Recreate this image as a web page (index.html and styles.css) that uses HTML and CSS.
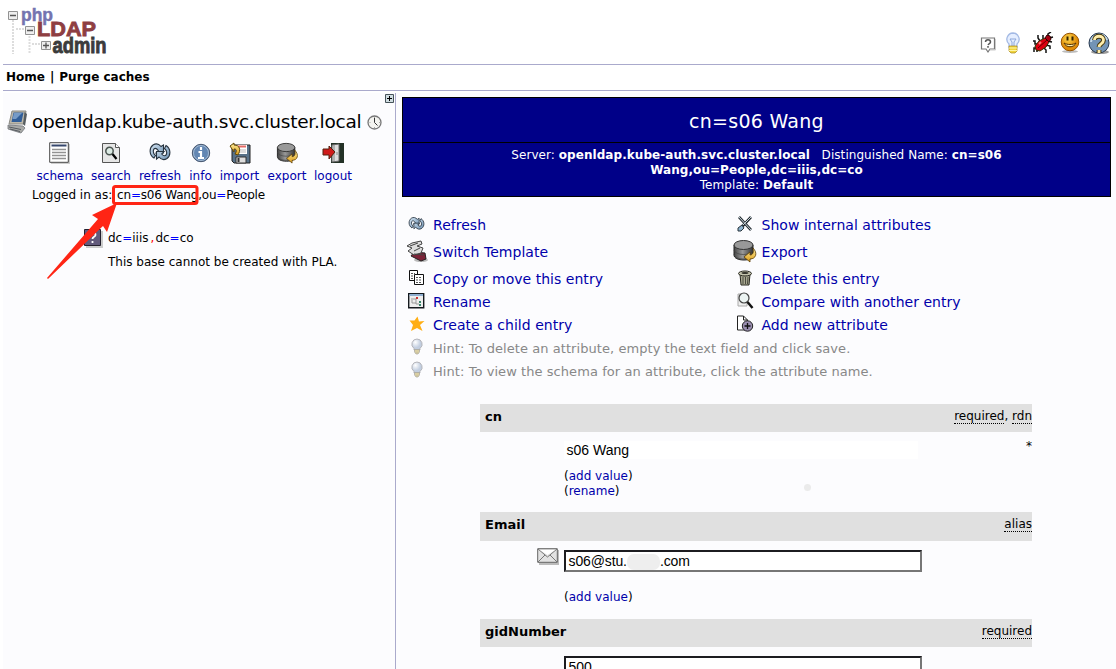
FILE: index.html
```html
<!DOCTYPE html>
<html lang="en">
<head>
<meta charset="utf-8">
<title>phpLDAPadmin</title>
<link rel="stylesheet" href="styles.css">
</head>
<body>
<svg class="defs" width="0" height="0">
  <defs>
    <linearGradient id="steel" x1="0" y1="0" x2="1" y2="1"><stop offset="0" stop-color="#d5e5f3"/><stop offset="1" stop-color="#6b8fb0"/></linearGradient>
    <linearGradient id="gold" x1="0" y1="0" x2="0" y2="1"><stop offset="0" stop-color="#fff0a0"/><stop offset="1" stop-color="#db9a16"/></linearGradient>
    <linearGradient id="drum" x1="0" x2="1"><stop offset="0" stop-color="#444"/><stop offset=".45" stop-color="#999"/><stop offset="1" stop-color="#333"/></linearGradient>
    <radialGradient id="glass" cx=".35" cy=".3"><stop offset="0" stop-color="#fff"/><stop offset="1" stop-color="#c2cee0"/></radialGradient>
    <radialGradient id="smile" cx=".4" cy=".3"><stop offset="0" stop-color="#ffd950"/><stop offset="1" stop-color="#df8c08"/></radialGradient>
    <symbol id="refresh" viewBox="0 0 22 20">
      <path d="M5 16C0 13 0 6 4 3c3-2 6-1 8 1.500L14.500 3v8H7l2.300-2.500C7 5.500 5 6 4.500 8c-.5 2 0 4 2 5.500z" fill="url(#steel)" stroke="#26323e" stroke-width="1.100"/>
      <path d="M17 3.500c5 3 5 10 1 13-3 2-6 1-8-1.500L7.500 17V9.500H15L12.700 12c2.300 2.500 4.300 2 4.800 0s0-4-2-5.500z" fill="url(#steel)" stroke="#26323e" stroke-width="1.100"/>
    </symbol>
    <symbol id="export" viewBox="0 0 24 24">
      <path d="M1 6v10c0 3 4 5 10 5s9-2 9-5V6z" fill="url(#drum)" stroke="#222"/>
      <ellipse cx="10.500" cy="6" rx="9.500" ry="4.500" fill="#999" stroke="#333"/>
      <path d="M1 11c1 6 18 6 19 0M1 15.500c1 6 18 6 19 0" fill="none" stroke="#444" stroke-width=".7"/>
      <path d="M20 9c5 5 3 11-3 11v3l-6-5 6-5v3c3 0 4-3 3-7z" fill="url(#gold)" stroke="#5b3d05" stroke-width=".8"/>
    </symbol>
    <symbol id="hint" viewBox="0 0 14 18">
      <path d="M7 1a5.200 5.200 0 0 0-3 9.400V12h6v-1.600A5.200 5.200 0 0 0 7 1z" fill="url(#glass)" stroke="#b6b6bb"/>
      <path d="M4.500 11.500h5V14L8 16H6l-1.500-2z" fill="#e8dca8" stroke="#999" stroke-width=".6"/><path d="M5 13h4M5.500 14.700h3" stroke="#b5ae98" stroke-width=".6"/>
    </symbol>
  </defs>
</svg>

<header class="top">
  <svg class="logo" width="112" height="60" viewBox="0 0 112 60">
    <path d="M10 20v34M13 29h12M26.500 36v18M29 44h11" stroke="#ddd" stroke-width="2" stroke-dasharray="2 1"/>
    <text x="18" y="21" class="logo-php" textLength="32" lengthAdjust="spacingAndGlyphs">php</text>
    <text x="34" y="36" class="logo-ldap" textLength="59" lengthAdjust="spacingAndGlyphs">LDAP</text>
    <text x="49.500" y="53" class="logo-admin" textLength="54" lengthAdjust="spacingAndGlyphs">admin</text>
    <g fill="#eee" stroke="#929292"><path d="M5.500 11.500h9v8h-9zM22.500 26.500h9v8h-9z"/><path d="M38.500 41.500h9v8h-9z"/></g>
    <path d="M7 15.500h6M24 30.500h6M40 45.500h6M43 42.500v6" stroke="#555" stroke-width="1.300"/>
  </svg>
  <nav class="toolbar">
    <svg class="t-say" width="16" height="18" viewBox="0 0 16 18"><path d="M1.500 2h13v11H10l-2 3-2-3H1.500z" fill="#fff" stroke="#777" stroke-width="1.200"/><path d="M15.500 3v11H10" fill="none" stroke="#ccc"/><path d="M5.500 6c0-3 5-3 5 0 0 1.500-2 1.500-2.400 3M8 10v1.700" fill="none" stroke="#555" stroke-width="1.500"/></svg>
    <svg class="t-bulb" width="16" height="23" viewBox="0 0 16 23"><path d="M8 1a6.300 6.300 0 0 0-4 11v3h8v-3A6.300 6.300 0 0 0 8 1z" fill="#e5eeff" stroke="#a3b9e4" stroke-width="1.300"/><path d="M5 7h6l-2 3v4M7 14v-4L5 7" fill="none" stroke="#8ea8db"/><path d="M4 14h8v5l-2 2H6l-2-2z" fill="#f0d43d" stroke="#a6851d" stroke-width=".7"/><path d="M4 16h8M4 18.500h8" stroke="#fff6a6"/></svg>
    <svg class="t-bug" width="22" height="22" viewBox="0 0 22 22"><path d="M6 12H3V9H1M8 9L6 6V3M11 7V3M14 13l4 1v3M12 16l2 2v3M7 16H2v4M16 5V2l3-2M17 6l4-1M15 9l5 1M5 17v3" stroke="#111" fill="none" stroke-width="1.500"/><path d="M3 14l4-5 6-3 4 4-3 5-6 4-4-1z" fill="#dc0010" stroke="#330"/><path d="M13 6l2-3 3 1 1 3-2 3z" fill="#a90010" stroke="#300"/><path d="M6 16l9-8" stroke="#600"/><path d="M7 12l2-2" stroke="#ff7777" stroke-width="2"/></svg>
    <svg class="t-smile" width="20" height="22" viewBox="0 0 20 22"><ellipse cx="10" cy="19.500" rx="8" ry="1.500" fill="#bbb"/><circle cx="10" cy="10" r="8.800" fill="url(#smile)" stroke="#965200"/><path d="M7.500 4.500v4M12.500 4.500v4" stroke="#342100" stroke-width="2"/><path d="M4 11c2 5 10 5 12 0-3 2-9 2-12 0z" fill="#fff1b0" stroke="#553200"/></svg>
    <svg width="22" height="23" viewBox="0 0 22 23"><ellipse cx="12" cy="20" rx="9" ry="2" fill="#999"/><circle cx="11" cy="11" r="10" fill="#7394b6" stroke="#293a50"/><path d="M3 10C4 2 16 0 19 8" stroke="#c4d9ea" stroke-width="2" fill="none"/><path d="M6.500 8c0-5 9-5 9 0 0 4-4 3-4.500 7M11 18v3" stroke="#443609" stroke-width="4.800" fill="none"/><path d="M6.500 8c0-5 9-5 9 0 0 4-4 3-4.500 7M11 18v3" stroke="#ffedaa" stroke-width="2.800" fill="none"/></svg>
  </nav>
</header>
<div class="menu"><b class="menu-text">Home<span class="bar">|</span>Purge caches</b></div>

<main class="main">
  <aside class="tree">
    <div class="expand"><svg width="9" height="9" viewBox="0 0 9 9"><path d="M.5.500h8v8h-8z" fill="#cfdce0" stroke="#465359"/><path d="M2 4.500h5M4.500 2v5" stroke="#000"/></svg></div>
    <div class="server">
      <svg width="22" height="24" viewBox="0 0 22 24"><path d="M5 1h14l-2 13H2z" fill="#bdb8aa" stroke="#8a8a84"/><path d="M6.500 2.500h10l-2 9.500h-10z" fill="#315e99"/><path d="M7 3h8l-6 6H5.500z" fill="#769bc7"/><path d="M17.500 2l2.500 2-2 12-2-2z" fill="#555c60"/><path d="M1 15l15 1 2 2-4 5-13-4z" fill="#a9aaa8" stroke="#71757a" stroke-width=".8"/><path d="M2 17l12 2.500M3 19l10 2.500" stroke="#565b60"/></svg>
      <span class="server-name">openldap.kube-auth.svc.cluster.local</span>
      <svg width="15" height="15" viewBox="0 0 15 15"><circle cx="7.500" cy="7.500" r="6.500" fill="#f4f4f0" stroke="#777" stroke-width="1.300"/><path d="M7.500 3v4.500l3 3" fill="none" stroke="#333"/><path d="M7.500 2v1M2.500 7.500h1M12 7.500h1M7.500 12v1" stroke="#aaa"/></svg>
    </div>
    <div class="actions">
      <a><svg width="22" height="22" viewBox="0 0 22 22"><path d="M2 2h19v20H2z" fill="#ccc"/><path d="M.7.700h18.600v19.600H.7z" fill="#fff" stroke="#494949"/><path d="M2.500 3.500h15" stroke="#36476d" stroke-width="2"/><path d="M3 7.500h14M3 10.500h14M3 13.500h14M3 16.500h14" stroke="#929292" stroke-width="1.300"/></svg><span>schema</span></a>
      <a><svg width="20" height="22" viewBox="0 0 20 22"><path d="M1.500 1.500h13l4 4v15h-17z" fill="#e6e6e6" stroke="#555"/><path d="M14.500 1.500v4h4" fill="#fff" stroke="#555"/><circle cx="8.500" cy="9" r="3.700" fill="#dcebe4" stroke="#4b5551" stroke-width="1.500"/><path d="M11.500 12l4 5" stroke="#000" stroke-width="2.200"/></svg><span>search</span></a>
      <a><svg width="22" height="22"><use href="#refresh" width="22" height="20"/></svg><span>refresh</span></a>
      <a><svg width="20" height="22" viewBox="0 0 20 22"><circle cx="10" cy="11" r="8.700" fill="#6387b3" stroke="#47566e"/><circle cx="10" cy="11" r="7.500" fill="none" stroke="#a4bad2"/><path d="M10 5v3M7.500 10H10v6M7 16h6" stroke="#fff" stroke-width="2.200" fill="none"/></svg><span>info</span></a>
      <a><svg width="22" height="22" viewBox="0 0 22 22"><path d="M3 3h18v18H5l-2-2z" fill="#577188" stroke="#222"/><path d="M7 3h11v9H7z" fill="#fff"/><path d="M8 4.500h9" stroke="#e66b66" stroke-width="2"/><path d="M9 8h8M9 10h8" stroke="#bbb"/><path d="M7 15h10v6H7z" fill="#ddd" stroke="#333"/><path d="M9.500 16v4" stroke="#333" stroke-width="2"/><path d="M1 4l4-3v2c6 0 7 5 4 10l-3-1c2-3 2-5-1-5v3z" fill="url(#gold)" stroke="#604707"/></svg><span>import</span></a>
      <a><svg width="23" height="22"><use href="#export" width="23" height="22"/></svg><span>export</span></a>
      <a><svg width="22" height="22" viewBox="0 0 22 22"><path d="M9 1h13v20H9z" fill="#233126"/><path d="M10 3l7-1v17l-7 1z" fill="#ddd" stroke="#666"/><path d="M12 3v16M15 10v3" stroke="#888"/><path d="M1 7h6V4l6 6-6 7v-4H1z" fill="#cf1b1b" stroke="#521"/></svg><span>logout</span></a>
    </div>
    <div class="login">Logged in as: <span class="dn">cn<i>=</i>s06 Wang,ou<i>=</i>People</span></div>
    <div class="base">
      <svg width="19" height="19" viewBox="0 0 19 19"><path d="M2 2h17v17H2z" fill="#ccc"/><path d="M.5.500h16v16H.5z" fill="#625a7c" stroke="#24202f"/><path d="M5.500 6c0-4 6-4 6 0 0 2-3 1.500-3 4M8.500 12v2" fill="none" stroke="#fff" stroke-width="1.800"/></svg>
      <span>dc<i>=</i>iiis<em>,</em>dc<i>=</i>co</span>
    </div>
    <div class="notice">This base cannot be created with PLA.</div>
    <svg class="marker" width="160" height="100" viewBox="0 0 160 100"><rect x="71.500" y="2.500" width="83.500" height="17" rx="2" fill="none" stroke="#ff2515" stroke-width="3"/><path d="M5 94L56 35 50 31 75 19 65 48 61 42 6 95z" fill="#ff2515"/></svg>
  </aside>

  <section class="content">
    <h1 class="title"><span>cn=s06 Wang</span></h1>
    <div class="subtitle">
      <div>Server: <b>openldap.kube-auth.svc.cluster.local</b> &nbsp; Distinguished Name: <b>cn=s06</b></div>
      <div><b>Wang,ou=People,dc=iiis,dc=co</b></div>
      <div>Template: <b>Default</b></div>
    </div>

    <div class="commands">
      <a><svg width="17" height="16"><use href="#refresh" width="17" height="15"/></svg><span>Refresh</span></a>
      <a><svg width="18" height="18" viewBox="0 0 18 18"><path d="M3 2l12 13M15 2L4 14" stroke="#252d33" stroke-width="2.600"/><path d="M3 2l12 13M15 2L7 10" stroke="#c8d4da" stroke-width="1"/><path d="M6 10l2 3-3 3H2v-3z" fill="#8cb2ce" stroke="#28343c"/></svg><span>Show internal attributes</span></a>
      <a class="tall"><svg width="22" height="22" viewBox="0 0 22 22"><ellipse cx="15" cy="20" rx="7" ry="2" fill="#bbb"/><path d="M5 16l3-4 11 1 1 6-5 2z" fill="#7d2338" stroke="#222"/><path d="M1 6l5-3 9-2 1 3-5 2 6 2-2 5-7 2-6-4 4-3z" fill="#ddd" stroke="#444"/><path d="M4 6l8-3M8 11l6-3M8 14l10 1" stroke="#444"/></svg><span>Switch Template</span></a>
      <a class="tall"><svg width="24" height="24"><use href="#export" width="24" height="24"/></svg><span>Export</span></a>
      <a><svg width="17" height="17" viewBox="0 0 17 17"><path d="M1.500 1.500h8v10h-8z" fill="#fff" stroke="#111"/><path d="M6.500 5.500h9v10h-9z" fill="#fff" stroke="#111"/><path d="M3 4.500h4M3 7h3M3 9.500h3M8 8.500h6M8 11h6M8 13.500h6" stroke="#555" stroke-dasharray="2 1"/></svg><span>Copy or move this entry</span></a>
      <a><svg width="16" height="18" viewBox="0 0 16 18"><path d="M3 5h10l-1 11H4z" fill="#aaa991" stroke="#28281f"/><ellipse cx="8" cy="4.500" rx="6.500" ry="2.500" fill="#c6c6ae" stroke="#28281f"/><ellipse cx="8" cy="4" rx="3.500" ry="1" fill="#34342b"/><path d="M6 8v7M8.500 8v7M11 8l-.5 7" stroke="#494a40"/></svg><span>Delete this entry</span></a>
      <a><svg width="17" height="16" viewBox="0 0 17 16"><path d="M.7.700h15v14H.7z" fill="#eee" stroke="#15191e" stroke-width="1.400"/><path d="M1.500 2h13.500" stroke="#8fafd0" stroke-width="2"/><path d="M4 5v5h4M5 6h3v5h3" fill="none" stroke="#999"/><path d="M8 5h2" stroke="#c33" stroke-width="2"/><path d="M11 9h2M11 12h2" stroke="#38866b" stroke-width="2"/></svg><span>Rename</span></a>
      <a><svg width="17" height="17" viewBox="0 0 17 17"><path d="M1 2h9v12H1z" fill="#eee" stroke="#aaa"/><circle cx="7" cy="6" r="5" fill="#ecf4f3" stroke="#444" stroke-width="1.200"/><path d="M10.500 10l5 6" stroke="#111" stroke-width="2.500"/></svg><span>Compare with another entry</span></a>
      <a><svg width="16" height="16" viewBox="0 0 16 16"><path d="M8.500.500l1.500 5 5.500-.5-4.500 4 2.500 6-5.500-3-6 3 2-6-3.500-4.500h5z" fill="#ffae13"/></svg><span>Create a child entry</span></a>
      <a><svg width="18" height="17" viewBox="0 0 18 17"><path d="M1.500 1h6l4 4v10h-10z" fill="#fff" stroke="#222"/><path d="M7.500 1v4h4" fill="none" stroke="#222"/><circle cx="11.500" cy="11" r="5.200" fill="#9a8eb0" stroke="#222"/><path d="M8.500 11h6M11.500 8v6" stroke="#111" stroke-width="1.300"/></svg><span>Add new attribute</span></a>
      <p><svg width="14" height="18"><use href="#hint" width="14" height="18"/></svg><span>Hint: To delete an attribute, empty the text field and click save.</span></p>
      <p><svg width="14" height="18"><use href="#hint" width="14" height="18"/></svg><span>Hint: To view the schema for an attribute, click the attribute name.</span></p>
    </div>

    <form class="entry">
      <div class="attr"><b>cn</b><span><u>required</u>, <u>rdn</u></span></div>
      <div class="value value-cn">
        <div class="field plain">s06 Wang</div><span class="star">*</span>
        <div class="links">(<a>add value</a>)<br>(<a>rename</a>)</div><i class="spot"></i>
      </div>
      <div class="attr attr-mail"><b>Email</b><span><u>alias</u></span></div>
      <div class="value value-mail">
        <svg class="mail" width="22" height="17" viewBox="0 0 22 17"><path d="M2 2h20v15H2z" fill="#bbb"/><path d="M.7.700h19.600v13.600H.7z" fill="#e2e2e2" stroke="#666"/><path d="M1 1l9.500 8L20 1M1 14l7-7M20 14l-7-7" fill="none" stroke="#777"/><path d="M3 2h15l-7.500 5z" fill="#fff"/></svg>
        <div class="field mail-field">s06@stu.<i class="blank"></i>.com</div>
        <div class="links">(<a>add value</a>)</div>
      </div>
      <div class="attr"><b>gidNumber</b><span><u>required</u></span></div>
      <div class="value"><div class="field">500</div></div>
    </form>
  </section>
</main>
</body>
</html>
```
FILE: styles.css
```css
* { box-sizing: border-box; }
body { margin: 0; width: 1116px; height: 669px; overflow: hidden; background: #fff; color: #000; font: 12px/15px "DejaVu Sans", sans-serif; }
svg { display: block; flex: none; }
.defs { position: absolute; }
a { color: #0000aa; text-decoration: none; }
i { font-style: normal; color: #00f; }
em { font-style: normal; color: red; margin: 0 1px 0 2px; }
.top { height: 65px; margin-left: 3px; border-bottom: 1px solid #aac; display: flex; justify-content: space-between; }
.logo text { font-family: "Liberation Sans", sans-serif; font-weight: bold; }
.logo .logo-php { font-size: 19px; fill: #7474b0; stroke: #7474b0; stroke-width: .5px; }
.logo .logo-ldap { font-size: 20px; fill: #8e3e42; stroke: #8e3e42; stroke-width: .8px; }
.logo .logo-admin { font-size: 22px; fill: #3b3b3b; stroke: #3b3b3b; stroke-width: .9px; }
.toolbar { display: flex; align-items: center; padding: 22px 6px 0 0; }
.t-say { margin: 3px 9px 0 0; }
.t-bulb { margin-right: 11px; }
.t-bug { margin-right: 6px; }
.t-smile { margin-right: 8px; }
.menu { height: 26px; margin-left: 3px; padding: 5px 3px; border-bottom: 1px solid #aac; }
.menu-text { font-size: 12px; }
.bar { margin: 0 5px; }
.main { margin: 2px 0 0 3px; height: 576px; background: #fcfcfe; display: flex; }
.tree { position: relative; width: 393px; border-right: 1px solid #aac; flex: none; }
.expand { height: 11px; padding: 1px 1px 0; display: flex; justify-content: flex-end; }
.server { height: 36px; margin-left: 4px; display: flex; align-items: center; }
.server-name { width: 332px; margin: 0 3px 0 3px; white-space: nowrap; font-size: 18.500px; line-height: 24px; letter-spacing: -.25px; }
.actions { margin: 2px 0 0 30px; display: grid; grid-template-columns: 54px 48px 50px 31px 47px 48px 44px; }
.actions a { display: flex; flex-direction: column; align-items: center; gap: 5px; }
.login { margin: 4px 0 0 29px; white-space: nowrap; }
.dn { margin-left: 1px; letter-spacing: -.2px; }
.base { margin: 25px 0 0 81px; height: 20px; display: flex; align-items: center; gap: 5px; }
.notice { margin: 7px 0 0 105px; white-space: nowrap; }
.marker { position: absolute; left: 39px; top: 91px; }
.content { flex: none; width: 720px; padding: 4px 5px 0 6px; }
.title { margin: 0; height: 46px; border: 1px solid #000; background: #008; color: #fff; text-align: center; font-size: 19px; font-weight: normal; line-height: 46px; letter-spacing: .28px; }
.subtitle { height: 55px; padding-top: 5px; border: 1px solid #000; margin-top: -1px; background: #008; color: #fff; text-align: center; white-space: nowrap; letter-spacing: .06px; }
.commands { margin: 17px 0 0 5px; display: grid; grid-template-columns: 328.500px 1fr; font-size: 14px; line-height: 23px; letter-spacing: .03px; }
.commands a, .commands p { height: 23px; margin: 0; display: grid; grid-template-columns: 20px 1fr; gap: 6px; align-items: center; white-space: nowrap; }
.commands svg { justify-self: center; margin: -4px 0 0 -1px; }
.commands .tall { height: 31px; }
.commands p { grid-column: 1 / 3; color: #888; font-size: 13px; letter-spacing: .065px; }
.entry { margin: 21px 0 0 78px; width: 552px; }
.attr { height: 28px; background: #e0e0e0; display: flex; justify-content: space-between; padding: 5px 0 0 5px; }
.attr b { font-size: 13px; }
.attr-mail { height: 29px; }
u { text-decoration: none; border-bottom: 1px dotted #000; line-height: 13px; display: inline-block; }
.value { position: relative; padding: 9px 0 0 84px; }
.value-cn { height: 80px; }
.value-mail { height: 78px; }
.field { width: 358px; height: 22px; padding: 0 2.500px; border: 2px solid; border-color: #1c1c20 #767676 #767676 #1c1c20; background: #fff; font: 14px/18px "Liberation Sans", sans-serif; }
.mail-field { letter-spacing: -.12px; }
.plain { width: 354px; height: 18px; border: 0; }
.links { margin-top: 10px; line-height: 15px; }
.value-mail .links { margin-top: 18px; }
.star { position: absolute; right: 0; top: 7px; }
.spot { position: absolute; left: 324px; top: 52px; width: 7px; height: 7px; border-radius: 50%; background: #ebebeb; }
.mail { position: absolute; left: 57px; top: 7px; }
.blank { display: inline-block; width: 33px; height: 16px; border-radius: 7px; background: #eee; vertical-align: middle; }
```
